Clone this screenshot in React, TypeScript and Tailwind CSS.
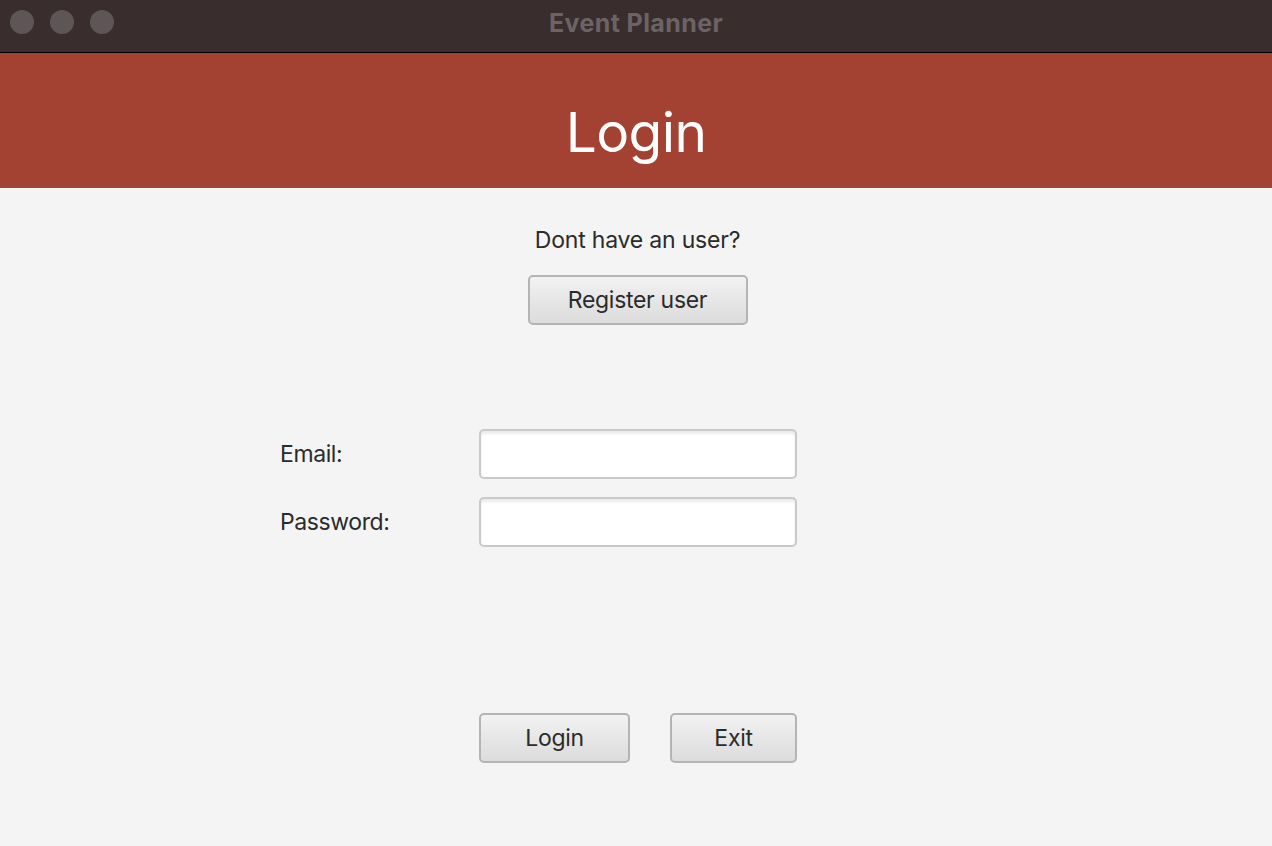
export default function App() {
  const font = { fontFamily: "Inter, 'Noto Sans', sans-serif" };
  const btn =
    "h-[50px] rounded-[5px] border-2 border-[#b4b4b4] bg-gradient-to-b from-[#f2f2f2] to-[#dcdcdc] text-[23px] text-[#2b2b2b] tracking-[-0.3px]";
  const input =
    "h-[50px] w-[318px] rounded-[5px] border-2 border-[#c9c9c9] bg-white shadow-[inset_0_3px_3px_rgba(0,0,0,0.08)] px-2 text-[20px] outline-none";

  return (
    <div className="w-[1272px] h-[846px] flex flex-col bg-[#f4f4f4] overflow-hidden" style={font}>
      {/* window title bar */}
      <div className="relative h-[53px] bg-[#3a2d2e] border-b border-black flex items-center justify-center pb-[6px]">
        <div className="absolute left-[10px] top-[10px] flex gap-4">
          <span className="w-6 h-6 rounded-full bg-[#5e5556]" />
          <span className="w-6 h-6 rounded-full bg-[#5e5556]" />
          <span className="w-6 h-6 rounded-full bg-[#5e5556]" />
        </div>
        <span className="text-[25px] font-bold text-[#6c6364] tracking-[0.4px] leading-none">Event Planner</span>
      </div>

      {/* header */}
      <div className="h-[135px] bg-[#a34232] flex items-center justify-center pt-[24px]">
        <h1 className="text-[55px] text-white leading-none tracking-[-0.6px]">Login</h1>
      </div>

      {/* body */}
      <div className="flex flex-col items-center pl-[3px]">
        <p className="mt-[38px] h-[28px] leading-[28px] text-[23px] text-[#2b2b2b] tracking-[-0.2px]">
          Dont have an user?
        </p>
        <button className={`${btn} mt-[21px] w-[220px]`}>Register user</button>
      </div>

      <div className="mt-[104px] pl-[280px] grid grid-cols-[199px_318px] gap-y-[18px] items-center">
        <label className="text-[23px] text-[#2b2b2b] tracking-[-0.4px]">Email:</label>
        <input className={input} />
        <label className="text-[23px] text-[#2b2b2b] tracking-[-0.4px]">Password:</label>
        <input type="password" className={input} />
        <div />
        <div className="mt-[148px] flex justify-between">
          <button className={`${btn} w-[151px]`}>Login</button>
          <button className={`${btn} w-[127px]`}>Exit</button>
        </div>
      </div>
    </div>
  );
}
